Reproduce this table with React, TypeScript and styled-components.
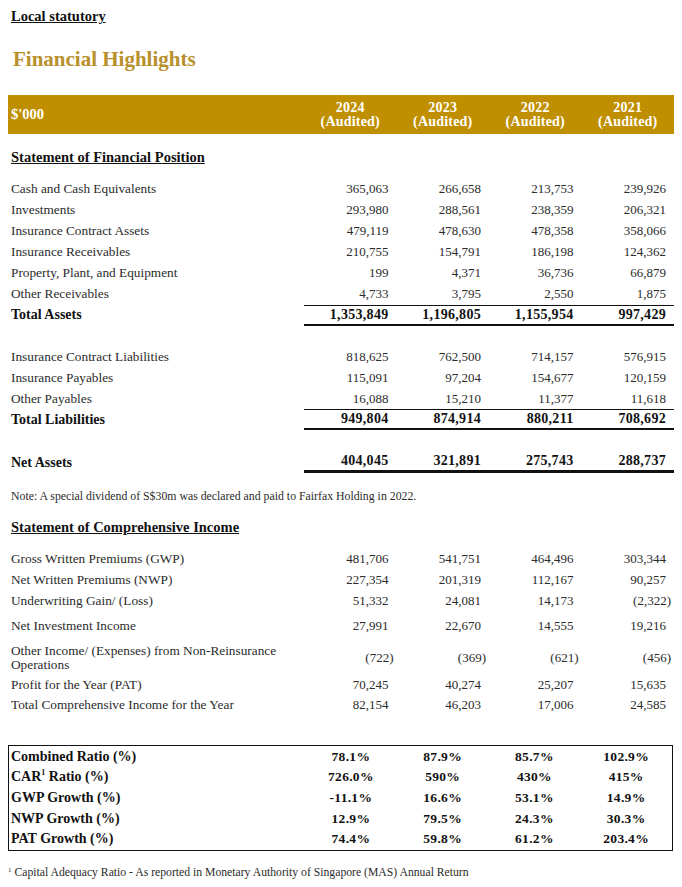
import React from "react";
import styled, { createGlobalStyle } from "styled-components";

const GlobalStyle = createGlobalStyle`
  html, body { margin: 0; padding: 0; background: #ffffff; }
  body { font-family: "Liberation Serif", "Times New Roman", serif; color: #2b2b2b; }
  * { box-sizing: border-box; }
`;

const Page = styled.div`
  width: 682px;
  padding: 0 8px 20px 8px;
`;

const TopLink = styled.div`
  margin-top: 8px;
  padding-left: 3px;
  font-size: 14.5px;
  line-height: 16px;
  font-weight: 700;
  color: #111;
  text-decoration: underline;
`;

const Title = styled.h1`
  margin: 23px 0 0 0;
  padding-left: 5px;
  font-size: 21px;
  line-height: 24px;
  font-weight: 700;
  color: #b8902c;
`;

const Grid = styled.div`
  display: grid;
  grid-template-columns: 296px repeat(4, 1fr);
  align-items: center;
`;

const HeaderBar = styled(Grid)`
  margin-top: 24px;
  height: 39px;
  background: #bf8f00;
  color: #ffffff;
  font-weight: 700;
`;

const HeaderLabel = styled.div`
  padding-left: 3px;
  font-size: 14.5px;
`;

const HeaderYear = styled.div`
  text-align: center;
  font-size: 14px;
  line-height: 14px;
  letter-spacing: 0.2px;
`;

const SectionTitle = styled.div<{ $top: number }>`
  margin-top: ${(p) => p.$top}px;
  margin-bottom: 13.5px;
  padding-left: 3px;
  font-size: 14.5px;
  line-height: 16px;
  font-weight: 700;
  color: #111;
  text-decoration: underline;
`;

const Table = styled.div<{ $top?: number }>`
  margin-top: ${(p) => p.$top ?? 0}px;
`;

const Row = styled(Grid)<{ $h?: number }>`
  height: ${(p) => p.$h ?? 21}px;
`;

const Label = styled.div<{ $bold?: boolean }>`
  padding-left: 3px;
  padding-right: 16px;
  font-size: ${(p) => (p.$bold ? 14 : 13.3)}px;
  line-height: 14px;
  font-weight: ${(p) => (p.$bold ? 700 : 400)};
  color: ${(p) => (p.$bold ? "#111" : "#2b2b2b")};
`;

const Num = styled.div<{ $bold?: boolean; $neg?: boolean; $rule?: "total" | "net" }>`
  height: 100%;
  display: flex;
  align-items: center;
  justify-content: flex-end;
  padding-right: ${(p) => (p.$neg ? 3 : 8)}px;
  font-size: ${(p) => (p.$bold ? 14 : 13)}px;
  font-weight: ${(p) => (p.$bold ? 700 : 400)};
  letter-spacing: ${(p) => (p.$bold ? 0.3 : 0)}px;
  color: ${(p) => (p.$bold ? "#111" : "#2b2b2b")};
  border-top: ${(p) => (p.$rule === "total" ? "1px solid #111" : "none")};
  border-bottom: ${(p) =>
    p.$rule === "total" ? "2px solid #111" : p.$rule === "net" ? "3px solid #111" : "none"};
`;

const Note = styled.div`
  margin-top: 15.5px;
  padding-left: 3px;
  font-size: 11.8px;
  line-height: 14px;
  color: #2b2b2b;
`;

const RatioBox = styled.div`
  margin-top: 29.5px;
  width: 665px;
  border: 1.5px solid #111;
  padding: 1px 0 1px 0;
`;

const RatioRow = styled(Grid)`
  height: 20.6px;
`;

const RatioLabel = styled.div`
  padding-left: 2px;
  font-size: 14px;
  font-weight: 700;
  color: #111;
  sup { font-size: 8px; line-height: 0; }
`;

const RatioValue = styled.div`
  text-align: center;
  font-size: 13.5px;
  font-weight: 700;
  letter-spacing: 0.3px;
  color: #111;
`;

const Footnote = styled.div`
  margin-top: 15px;
  font-size: 11.7px;
  line-height: 14px;
  color: #2b2b2b;
  sup { font-size: 7px; line-height: 0; margin-right: 3px; }
`;

type R = { label: string; values: string[]; h?: number };

const assets: R[] = [
  { label: "Cash and Cash Equivalents", values: ["365,063", "266,658", "213,753", "239,926"] },
  { label: "Investments", values: ["293,980", "288,561", "238,359", "206,321"] },
  { label: "Insurance Contract Assets", values: ["479,119", "478,630", "478,358", "358,066"] },
  { label: "Insurance Receivables", values: ["210,755", "154,791", "186,198", "124,362"] },
  { label: "Property, Plant, and Equipment", values: ["199", "4,371", "36,736", "66,879"] },
  { label: "Other Receivables", values: ["4,733", "3,795", "2,550", "1,875"] },
];

const liabilities: R[] = [
  { label: "Insurance Contract Liabilities", values: ["818,625", "762,500", "714,157", "576,915"] },
  { label: "Insurance Payables", values: ["115,091", "97,204", "154,677", "120,159"] },
  { label: "Other Payables", values: ["16,088", "15,210", "11,377", "11,618"] },
];

const income: R[] = [
  { label: "Gross Written Premiums (GWP)", values: ["481,706", "541,751", "464,496", "303,344"] },
  { label: "Net Written Premiums (NWP)", values: ["227,354", "201,319", "112,167", "90,257"] },
  { label: "Underwriting Gain/ (Loss)", values: ["51,332", "24,081", "14,173", "(2,322)"] },
  { label: "Net Investment Income", values: ["27,991", "22,670", "14,555", "19,216"], h: 29 },
  {
    label: "Other Income/ (Expenses) from Non-Reinsurance Operations",
    values: ["(722)", "(369)", "(621)", "(456)"],
    h: 35,
  },
  { label: "Profit for the Year (PAT)", values: ["70,245", "40,274", "25,207", "15,635"], h: 19 },
  { label: "Total Comprehensive Income for the Year", values: ["82,154", "46,203", "17,006", "24,585"] },
];

const ratios: { label: React.ReactNode; values: string[] }[] = [
  { label: "Combined Ratio (%)", values: ["78.1%", "87.9%", "85.7%", "102.9%"] },
  { label: <>CAR<sup>1</sup> Ratio (%)</>, values: ["726.0%", "590%", "430%", "415%"] },
  { label: "GWP Growth (%)", values: ["-11.1%", "16.6%", "53.1%", "14.9%"] },
  { label: "NWP Growth (%)", values: ["12.9%", "79.5%", "24.3%", "30.3%"] },
  { label: "PAT Growth (%)", values: ["74.4%", "59.8%", "61.2%", "203.4%"] },
];

const DataRows = ({ rows }: { rows: R[] }) => (
  <>
    {rows.map((r) => (
      <Row key={r.label} $h={r.h}>
        <Label>{r.label}</Label>
        {r.values.map((v, i) => (
          <Num key={i} $neg={v.startsWith("(")}>
            {v}
          </Num>
        ))}
      </Row>
    ))}
  </>
);

const TotalRow = ({ label, values, rule }: { label: string; values: string[]; rule: "total" | "net" }) => (
  <Row>
    <Label $bold>{label}</Label>
    {values.map((v, i) => (
      <Num key={i} $bold $rule={rule}>
        {v}
      </Num>
    ))}
  </Row>
);

export default function App() {
  return (
    <>
      <GlobalStyle />
      <Page>
        <TopLink>Local statutory</TopLink>
        <Title>Financial Highlights</Title>

        <HeaderBar>
          <HeaderLabel>$'000</HeaderLabel>
          {["2024", "2023", "2022", "2021"].map((y) => (
            <HeaderYear key={y}>
              {y}
              <br />
              (Audited)
            </HeaderYear>
          ))}
        </HeaderBar>

        <SectionTitle $top={15}>Statement of Financial Position</SectionTitle>
        <Table>
          <DataRows rows={assets} />
          <TotalRow label="Total Assets" values={["1,353,849", "1,196,805", "1,155,954", "997,429"]} rule="total" />
        </Table>

        <Table $top={20.5}>
          <DataRows rows={liabilities} />
          <TotalRow label="Total Liabilities" values={["949,804", "874,914", "880,211", "708,692"]} rule="total" />
        </Table>

        <Table $top={22}>
          <TotalRow label="Net Assets" values={["404,045", "321,891", "275,743", "288,737"]} rule="net" />
        </Table>

        <Note>Note: A special dividend of S$30m was declared and paid to Fairfax Holding in 2022.</Note>

        <SectionTitle $top={16}>Statement of Comprehensive Income</SectionTitle>
        <Table>
          <DataRows rows={income} />
        </Table>

        <RatioBox>
          {ratios.map((r, idx) => (
            <RatioRow key={idx}>
              <RatioLabel>{r.label}</RatioLabel>
              {r.values.map((v, i) => (
                <RatioValue key={i}>{v}</RatioValue>
              ))}
            </RatioRow>
          ))}
        </RatioBox>

        <Footnote>
          <sup>1</sup>Capital Adequacy Ratio - As reported in Monetary Authority of Singapore (MAS) Annual Return
        </Footnote>
      </Page>
    </>
  );
}
